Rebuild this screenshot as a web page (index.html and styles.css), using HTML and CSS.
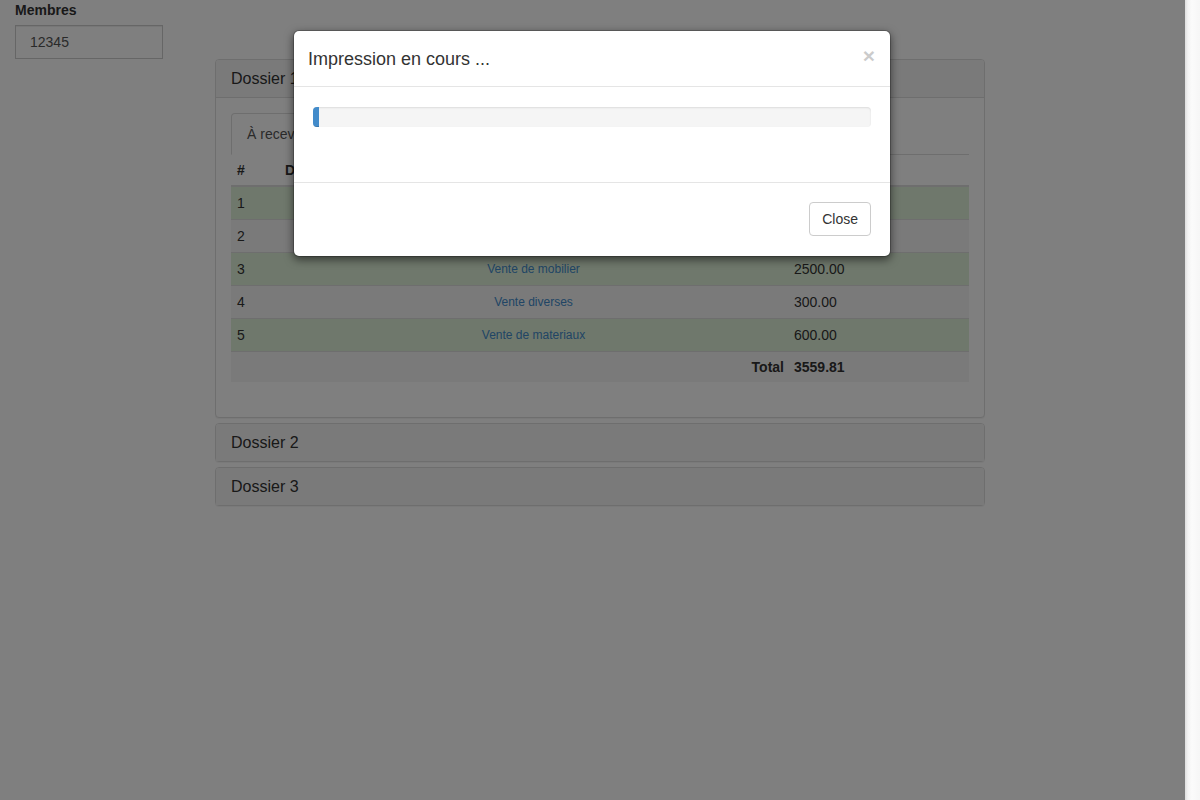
FILE: index.html
```html
<!DOCTYPE html>
<html lang="fr">
<head>
<meta charset="utf-8">
<title>Impression</title>
<link rel="stylesheet" href="styles.css">
</head>
<body>
<div class="viewport">
  <div class="page">
    <div class="content">
      <div class="form-group">
        <label class="label">Membres</label>
        <input class="input" type="text" value="12345">
      </div>
      <div class="panel-group">
        <div class="panel">
          <div class="panel-heading">Dossier 1</div>
          <div class="panel-body">
            <ul class="nav-tabs">
              <li class="tab active">À recevoir</li>
              <li class="tab">À payer</li>
            </ul>
            <table class="table">
              <colgroup>
                <col class="c-num">
                <col class="c-desc">
                <col class="c-amt">
              </colgroup>
              <thead>
                <tr><th>#</th><th>Description</th><th>Montant</th></tr>
              </thead>
              <tbody>
                <tr class="success"><td>1</td><td class="desc"><a href="#">Vente de livres</a></td><td>100.00</td></tr>
                <tr class="active"><td>2</td><td class="desc"><a href="#">Vente de vêtements</a></td><td>59.81</td></tr>
                <tr class="success"><td>3</td><td class="desc"><a href="#">Vente de mobilier</a></td><td>2500.00</td></tr>
                <tr class="active"><td>4</td><td class="desc"><a href="#">Vente diverses</a></td><td>300.00</td></tr>
                <tr class="success"><td>5</td><td class="desc"><a href="#">Vente de materiaux</a></td><td>600.00</td></tr>
                <tr class="active total"><td></td><td class="total-label">Total</td><td>3559.81</td></tr>
              </tbody>
            </table>
          </div>
        </div>
        <div class="panel">
          <div class="panel-heading">Dossier 2</div>
        </div>
        <div class="panel">
          <div class="panel-heading">Dossier 3</div>
        </div>
      </div>
    </div>

    <div class="backdrop"></div>

    <div class="modal">
      <div class="modal-header">
        <h4 class="modal-title">Impression en cours ...</h4>
        <button class="close" type="button">×</button>
      </div>
      <div class="modal-body">
        <div class="progress"><div class="progress-bar" style="width: 1%"></div></div>
      </div>
      <div class="modal-footer">
        <button class="btn" type="button">Close</button>
      </div>
    </div>
  </div>
  <div class="scrollbar"></div>
</div>
</body>
</html>
```

FILE: styles.css
```css
* { box-sizing: border-box; }

html, body {
  margin: 0;
  padding: 0;
  height: 100%;
}

body {
  font-family: "Liberation Sans", Arial, Helvetica, sans-serif;
  font-size: 14px;
  line-height: 20px;
  color: #333;
  background: #fff;
}

.viewport {
  display: flex;
  width: 1200px;
  height: 800px;
  overflow: hidden;
}

.page {
  position: relative;
  width: 1185px;
  height: 800px;
  overflow: hidden;
  background: #fff;
}

.scrollbar {
  width: 15px;
  height: 800px;
  background: linear-gradient(to right, #e6e6e6 0, #f4f4f4 2px, #fbfbfb 6px, #f6f6f6 100%);
  border-left: 1px solid #e2e2e2;
}

.content {
  padding: 0 15px;
}

.form-group {
  display: flex;
  flex-direction: column;
  align-items: flex-start;
}

.label {
  font-weight: bold;
  margin-bottom: 5px;
  line-height: 20px;
}

.input {
  width: 148px;
  height: 34px;
  padding: 6px 14px;
  font-family: inherit;
  font-size: 14px;
  color: #555;
  border: 1px solid #ccc;
  border-radius: 0;
  background: #fff;
  box-shadow: inset 0 1px 1px rgba(0,0,0,.075);
  outline: none;
}

.panel-group {
  margin-left: 200px;
  width: 770px;
}

.panel {
  border: 1px solid #ddd;
  border-radius: 4px;
  background: #fff;
  box-shadow: 0 1px 1px rgba(0,0,0,.05);
}

.panel + .panel { margin-top: 5px; }

.panel-heading {
  padding: 10px 15px;
  font-size: 16px;
  line-height: 17px;
  background: #f5f5f5;
  border-radius: 3px 3px 0 0;
}

.panel-body {
  border-top: 1px solid #ddd;
  padding: 15px 15px 15px;
}

.nav-tabs {
  list-style: none;
  margin: 0;
  padding: 0;
  display: flex;
  border-bottom: 1px solid #ddd;
}

.tab {
  padding: 10px 15px;
  line-height: 20px;
  margin-right: 2px;
  margin-bottom: -1px;
  border: 1px solid transparent;
  border-radius: 4px 4px 0 0;
  color: #428bca;
}

.tab.active {
  color: #555;
  background: #fff;
  border-color: #ddd #ddd transparent;
}

.table {
  width: 100%;
  border-collapse: collapse;
  margin-bottom: 20px;
}

.c-num { width: 48px; }
.c-amt { width: 181px; }

.table th {
  text-align: left;
  font-weight: bold;
  padding: 5px 6px;
  line-height: 20px;
  border-bottom: 2px solid #ddd;
}

.table td {
  padding: 6px 6px;
  line-height: 20px;
  border-top: 1px solid #ddd;
}

.table tbody tr:first-child td { border-top: 0; }

.table tr.success td { background: #dff0d8; }
.table tr.active td { background: #f5f5f5; }

.table td.desc {
  text-align: center;
  font-size: 12px;
}

.table td.desc a {
  color: #428bca;
  text-decoration: none;
}

.table tr.total td {
  font-weight: bold;
  padding-top: 5px;
  padding-bottom: 5px;
}

.table td.total-label { text-align: right; padding-right: 4px; }

/* modal */
.backdrop {
  position: absolute;
  inset: 0;
  background: rgba(0,0,0,.5);
}

.modal {
  position: absolute;
  top: 30px;
  left: 293px;
  width: 598px;
  background: #fff;
  border: 1px solid rgba(0,0,0,.2);
  border-radius: 6px;
  box-shadow: 0 3px 9px rgba(0,0,0,.5);
  background-clip: padding-box;
}

.modal-header {
  display: flex;
  justify-content: space-between;
  align-items: flex-start;
  padding: 15px 15px 14px 14px;
  border-bottom: 1px solid #e5e5e5;
}

.modal-title {
  margin: 0;
  font-size: 18px;
  font-weight: normal;
  line-height: 26px;
  color: #333;
}

.close {
  margin-top: -1px;
  padding: 0;
  border: 0;
  background: transparent;
  font-family: inherit;
  font-size: 21px;
  font-weight: bold;
  line-height: 1;
  color: #000;
  opacity: .2;
  text-shadow: 0 1px 0 #fff;
}

.modal-body {
  padding: 20px 19px 20px 19px;
}

.progress {
  height: 20px;
  margin-bottom: 20px;
  overflow: hidden;
  background: #f5f5f5;
  border-radius: 4px;
  box-shadow: inset 0 1px 2px rgba(0,0,0,.1);
}

.progress-bar {
  height: 100%;
  background: #428bca;
  box-shadow: inset 0 -1px 0 rgba(0,0,0,.15);
}

.modal-footer {
  margin-top: 15px;
  padding: 19px 19px 20px;
  border-top: 1px solid #e5e5e5;
  display: flex;
  justify-content: flex-end;
}

.btn {
  height: 34px;
  padding: 6px 12px;
  font-family: inherit;
  font-size: 14px;
  line-height: 20px;
  color: #333;
  background: #fff;
  border: 1px solid #ccc;
  border-radius: 4px;
}
```
